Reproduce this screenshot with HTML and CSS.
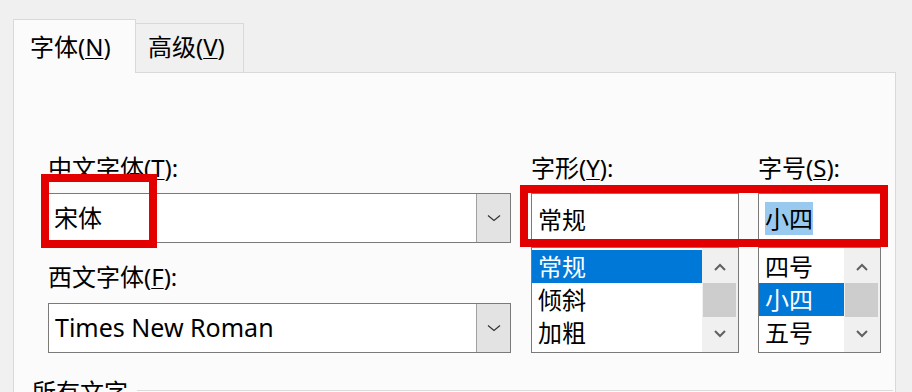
FILE: index.html
```html
<!DOCTYPE html>
<html lang="zh-CN">
<head>
    <meta charset="UTF-8">
    <title>字体</title>
    <link rel="stylesheet" href="styles.css">
</head>
<body>
    <div class="tabs">
        <div class="tab active">字体(<u>N</u>)</div>
        <div class="tab">高级(<u>V</u>)</div>
    </div>

    <div class="panel">
        <div class="fonts">
            <div class="col-left">
                <div class="label">中文字体(<u>T</u>):</div>
                <div class="combo">
                    <span class="value">宋体</span>
                    <span class="drop">
                        <svg width="14" height="8" viewBox="0 0 14 8"><path d="M1 1.5 L7 6.5 L13 1.5" fill="none" stroke="#333" stroke-width="1.2"/></svg>
                    </span>
                    <span class="mark mark-face"></span>
                </div>
                <div class="label label-gap">西文字体(<u>F</u>):</div>
                <div class="combo">
                    <span class="value latin">Times New Roman</span>
                    <span class="drop">
                        <svg width="14" height="8" viewBox="0 0 14 8"><path d="M1 1.5 L7 6.5 L13 1.5" fill="none" stroke="#333" stroke-width="1.2"/></svg>
                    </span>
                </div>
            </div>

            <div class="col-right">
                <div class="col-style">
                    <div class="label">字形(<u>Y</u>):</div>
                    <div class="textbox"><span>常规</span></div>
                    <div class="list">
                        <div class="items">
                            <div class="item selected">常规</div>
                            <div class="item">倾斜</div>
                            <div class="item">加粗</div>
                        </div>
                        <div class="scrollbar">
                            <span class="arrow"><svg width="12" height="8" viewBox="0 0 12 8"><path d="M1 7 L6 2 L11 7" fill="none" stroke="#606060" stroke-width="2"/></svg></span>
                            <span class="thumb"></span>
                            <span class="arrow"><svg width="12" height="8" viewBox="0 0 12 8"><path d="M1 1 L6 6 L11 1" fill="none" stroke="#606060" stroke-width="2"/></svg></span>
                        </div>
                    </div>
                </div>

                <div class="col-size">
                    <div class="label">字号(<u>S</u>):</div>
                    <div class="textbox"><span class="picked">小四</span></div>
                    <div class="list">
                        <div class="items">
                            <div class="item">四号</div>
                            <div class="item selected">小四</div>
                            <div class="item">五号</div>
                        </div>
                        <div class="scrollbar">
                            <span class="arrow"><svg width="12" height="8" viewBox="0 0 12 8"><path d="M1 7 L6 2 L11 7" fill="none" stroke="#606060" stroke-width="2"/></svg></span>
                            <span class="thumb"></span>
                            <span class="arrow"><svg width="12" height="8" viewBox="0 0 12 8"><path d="M1 1 L6 6 L11 1" fill="none" stroke="#606060" stroke-width="2"/></svg></span>
                        </div>
                    </div>
                </div>

                <span class="mark mark-style"></span>
            </div>
        </div>

        <div class="group">
            <span class="group-title">所有文字</span>
            <span class="rule"></span>
        </div>
    </div>
</body>
</html>
```

FILE: styles.css
```css
html, body {
    height: 392px;
    overflow: hidden;
}
body {
    margin: 0;
    background-color: #f0f0f0;
    font-family: "Noto Sans", "Noto Sans CJK SC", sans-serif;
    font-size: 24px;
    color: #000;
}
u {
    text-underline-offset: 2px;
    text-decoration-thickness: 1px;
}

/* tabs */
.tabs {
    display: flex;
    align-items: flex-end;
    padding: 19px 0 0 13px;
}
.tab {
    box-sizing: border-box;
    width: 108px;
    height: 49px;
    padding: 5px 0 0 12px;
    line-height: 36px;
    border: 1px solid #d9d9d9;
    border-left: none;
    border-bottom: none;
    background-color: #f0f0f0;
}
.tab.active {
    position: relative;
    z-index: 1;
    width: 123px;
    height: 54px;
    margin-bottom: -1px;
    padding: 9px 0 0 16px;
    border-left: 1px solid #d9d9d9;
    background-color: #fbfbfb;
}

/* panel */
.panel {
    box-sizing: border-box;
    width: 883px;
    height: 320px;
    margin-left: 13px;
    padding: 77px 0 0 18px;
    border: 1px solid #d9d9d9;
    border-bottom: none;
    background-color: #fbfbfb;
    overflow: hidden;
}
.fonts {
    display: flex;
    gap: 20px;
    margin-left: 16px;
}
.label {
    height: 36px;
    line-height: 36px;
    white-space: nowrap;
}

/* left column */
.col-left {
    width: 463px;
}
.col-left .label {
    margin-bottom: 7px;
}
.col-left .label-gap {
    margin-top: 16px;
    margin-bottom: 8px;
}
.combo {
    position: relative;
    box-sizing: border-box;
    display: flex;
    align-items: center;
    height: 50px;
    border: 1px solid #7a7a7a;
    background-color: #fff;
}
.combo .value {
    flex: 1;
    padding-left: 5px;
    line-height: 36px;
}
.combo .latin {
    font-size: 25px;
    padding-left: 6px;
    margin-top: -3px;
}
.drop {
    box-sizing: border-box;
    display: flex;
    align-items: center;
    justify-content: center;
    width: 34px;
    height: 48px;
    border-left: 1px solid #a0a0a0;
    background-color: #e3e3e3;
}

/* right columns */
.col-right {
    position: relative;
    display: flex;
    gap: 19px;
}
.col-style {
    width: 208px;
}
.col-size {
    width: 123px;
}
.textbox {
    box-sizing: border-box;
    display: flex;
    align-items: center;
    height: 50px;
    margin-top: 7px;
    padding-left: 6px;
    border: 1px solid #7a7a7a;
    background-color: #fff;
}
.picked {
    display: inline-block;
    line-height: 33px;
    background-color: #99c9ef;
}
.list {
    box-sizing: border-box;
    display: flex;
    height: 106px;
    margin-top: 4px;
    border: 1px solid #7a7a7a;
    background-color: #fff;
}
.items {
    flex: 1;
    padding-top: 2px;
}
.item {
    height: 33px;
    padding-left: 6px;
    line-height: 33px;
}
.item.selected {
    background-color: #0078d7;
    color: #fff;
}
.scrollbar {
    display: flex;
    flex-direction: column;
    width: 36px;
    padding-top: 2px;
    background-color: #f0f0f0;
}
.arrow {
    display: flex;
    align-items: center;
    justify-content: center;
    height: 33px;
}
.thumb {
    height: 34px;
    margin: 0 2px 0 1px;
    background-color: #cdcdcd;
}

/* red annotation boxes */
.mark {
    position: absolute;
    box-sizing: border-box;
    border: 8px solid #e30000;
}
.mark-face {
    left: -8px;
    top: -20px;
    width: 116px;
    height: 74px;
}
.mark-style {
    left: -11px;
    top: 35px;
    width: 368px;
    height: 62px;
}

/* group box below */
.group {
    display: flex;
    align-items: flex-start;
    margin-top: 21px;
    margin-right: 2px;
}
.group-title {
    line-height: 36px;
}
.rule {
    flex: 1;
    height: 1px;
    margin: 16px 0 0 9px;
    background-color: #dcdcdc;
}
```
